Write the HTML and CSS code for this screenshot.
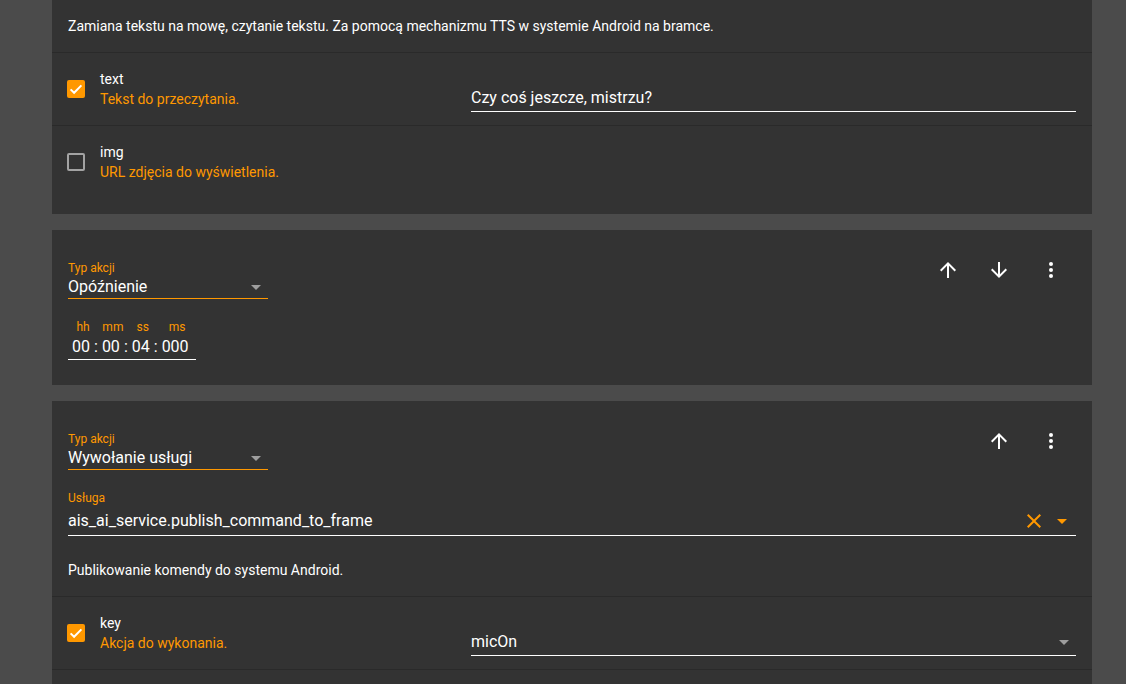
FILE: index.html
```html
<!DOCTYPE html>
<html lang="pl">
<head>
<meta charset="utf-8">
<title>Akcje</title>
<link rel="stylesheet" href="styles.css">
</head>
<body>
<div class="page">
  <section class="card">
    <p class="desc">Zamiana tekstu na mowę, czytanie tekstu. Za pomocą mechanizmu TTS w systemie Android na bramce.</p>
    <div class="param">
      <span class="cb checked"><svg viewBox="0 0 18 18" width="18" height="18"><polyline points="3.6,9.4 7.1,12.8 14.4,5.4" fill="none" stroke="#fff" stroke-width="2"/></svg></span>
      <div class="param-text"><div class="pname">text</div><div class="pdesc">Tekst do przeczytania.</div></div>
      <div class="pfield"><div class="pvalue">Czy coś jeszcze, mistrzu?</div></div>
    </div>
    <div class="param last">
      <span class="cb"></span>
      <div class="param-text"><div class="pname">img</div><div class="pdesc">URL zdjęcia do wyświetlenia.</div></div>
    </div>
  </section>

  <section class="card">
    <div class="head">
      <div class="select">
        <div class="flabel">Typ akcji</div>
        <div class="svalue"><span class="stext">Opóźnienie</span><svg class="drop" viewBox="0 0 24 24" width="24" height="24"><path d="M7 10l5 5 5-5z" fill="#9e9e9e"/></svg></div>
      </div>
      <div class="actions">
        <button class="ibtn" aria-label="W górę"><svg viewBox="0 0 24 24" width="24" height="24"><path d="M4 12l1.41 1.41L11 7.83V20h2V7.83l5.58 5.59L20 12l-8-8-8 8z" fill="#fff"/></svg></button>
        <button class="ibtn down" aria-label="W dół"><svg viewBox="0 0 24 24" width="24" height="24"><path d="M20 12l-1.41-1.41L13 16.17V4h-2v12.17l-5.58-5.59L4 12l8 8 8-8z" fill="#fff"/></svg></button>
        <button class="ibtn more" aria-label="Więcej"><svg viewBox="0 0 24 24" width="24" height="24"><circle cx="12" cy="6" r="2" fill="#fff"/><circle cx="12" cy="12" r="2" fill="#fff"/><circle cx="12" cy="18" r="2" fill="#fff"/></svg></button>
      </div>
    </div>
    <div class="time">
      <div class="unit u2"><span class="ulabel">hh</span><span class="uval">00</span></div>
      <span class="sep">:</span>
      <div class="unit u2"><span class="ulabel">mm</span><span class="uval">00</span></div>
      <span class="sep">:</span>
      <div class="unit u2"><span class="ulabel">ss</span><span class="uval">04</span></div>
      <span class="sep">:</span>
      <div class="unit u3"><span class="ulabel">ms</span><span class="uval">000</span></div>
    </div>
  </section>

  <section class="card">
    <div class="head">
      <div class="select">
        <div class="flabel">Typ akcji</div>
        <div class="svalue"><span class="stext">Wywołanie usługi</span><svg class="drop" viewBox="0 0 24 24" width="24" height="24"><path d="M7 10l5 5 5-5z" fill="#9e9e9e"/></svg></div>
      </div>
      <div class="actions">
        <button class="ibtn" aria-label="W górę"><svg viewBox="0 0 24 24" width="24" height="24"><path d="M4 12l1.41 1.41L11 7.83V20h2V7.83l5.58 5.59L20 12l-8-8-8 8z" fill="#fff"/></svg></button>
        <button class="ibtn more" aria-label="Więcej"><svg viewBox="0 0 24 24" width="24" height="24"><circle cx="12" cy="6" r="2" fill="#fff"/><circle cx="12" cy="12" r="2" fill="#fff"/><circle cx="12" cy="18" r="2" fill="#fff"/></svg></button>
      </div>
    </div>
    <div class="service">
      <div class="flabel">Usługa</div>
      <div class="servvalue">
        <span class="stext">ais_ai_service.publish_command_to_frame</span>
        <svg class="clear" viewBox="0 0 24 24" width="24" height="24"><path d="M19 6.41L17.59 5 12 10.59 6.41 5 5 6.41 10.59 12 5 17.59 6.41 19 12 13.41 17.59 19 19 17.59 13.41 12z" fill="#ff9800"/></svg>
        <svg class="drop2" viewBox="0 0 24 24" width="24" height="24"><path d="M7 10l5 5 5-5z" fill="#ff9800"/></svg>
      </div>
    </div>
    <p class="desc desc-service">Publikowanie komendy do systemu Android.</p>
    <div class="param">
      <span class="cb checked"><svg viewBox="0 0 18 18" width="18" height="18"><polyline points="3.6,9.4 7.1,12.8 14.4,5.4" fill="none" stroke="#fff" stroke-width="2"/></svg></span>
      <div class="param-text"><div class="pname">key</div><div class="pdesc">Akcja do wykonania.</div></div>
      <div class="pfield"><div class="pvalue pselect"><span class="stext">micOn</span><svg class="drop" viewBox="0 0 24 24" width="24" height="24"><path d="M7 10l5 5 5-5z" fill="#9e9e9e"/></svg></div></div>
    </div>
  </section>
</div>
</body>
</html>
```

FILE: styles.css
```css
html, body {
  margin: 0;
  height: 100%;
  overflow: hidden;
  background: #4b4b4b;
  font-family: Roboto, "Noto Sans", sans-serif;
  color: #fff;
}

.page {
  padding: 0 34px 0 52px;
  display: flex;
  flex-direction: column;
  gap: 16px;
}

.card {
  background: #333333;
  padding: 16px 0;
}

.desc {
  margin: 0;
  padding: 0 16px 16px;
  font-size: 14px;
  line-height: 20px;
  border-bottom: 1px solid #2a2a2a;
}

.desc-service {
  margin-top: 24px;
}

.param {
  display: flex;
  align-items: center;
  height: 72px;
  padding: 0 16px;
  border-bottom: 1px solid #2a2a2a;
}

.param.last {
  border-bottom: none;
}

.cb {
  box-sizing: border-box;
  width: 18px;
  height: 18px;
  margin-left: -1px;
  margin-right: 15px;
  border: 2px solid #a3a3a3;
  border-radius: 2px;
  flex: none;
  display: flex;
}

.cb.checked {
  background: #ff9800;
  border: none;
}

.param-text {
  flex: 1;
  font-size: 14px;
  line-height: 20px;
}

.pdesc {
  color: #ff9800;
}

.pfield {
  width: 605px;
  padding-top: 20px;
  flex: none;
}

.pvalue {
  font-size: 16px;
  line-height: 24px;
  padding-bottom: 1px;
  border-bottom: 1px solid #fff;
}

.pselect {
  display: flex;
  align-items: center;
}

.stext {
  flex: 1;
  white-space: nowrap;
}

.head {
  display: flex;
  justify-content: space-between;
  align-items: flex-start;
  padding: 0 16px;
}

.select {
  width: 200px;
  margin-top: 15px;
}

.flabel {
  font-size: 12px;
  line-height: 15px;
  color: #ff9800;
}

.svalue {
  display: flex;
  align-items: center;
  font-size: 16px;
  line-height: 22px;
  height: 22px;
  border-bottom: 1px solid #ff9800;
}

.drop {
  flex: none;
}

.actions {
  display: flex;
  gap: 2px;
  margin-right: 1px;
}

.ibtn {
  width: 48px;
  height: 48px;
  padding: 12px;
  border: none;
  background: none;
  display: flex;
  align-items: center;
  justify-content: center;
}

.ibtn.down {
  margin-left: 1px;
}

.ibtn.more {
  margin-left: 2px;
}

.time {
  display: flex;
  align-items: flex-end;
  width: fit-content;
  margin: 20px 0 9px 16px;
  padding: 0 7px 0 4px;
  border-bottom: 1px solid #fff;
}

.unit {
  display: flex;
  flex-direction: column;
  align-items: center;
}

.u2 {
  width: 18px;
}

.u3 {
  width: 27px;
}

.ulabel {
  font-size: 12px;
  line-height: 16px;
  color: #ff9800;
  padding-left: 4px;
  white-space: nowrap;
}

.uval {
  font-size: 16px;
  line-height: 24px;
}

.sep {
  font-size: 16px;
  line-height: 24px;
  padding: 0 4px;
}

.service {
  margin: 20px 16px 0;
}

.service .flabel {
  line-height: 16px;
}

.servvalue {
  display: flex;
  align-items: center;
  gap: 4px;
  font-size: 16px;
  line-height: 29px;
  height: 29px;
  border-bottom: 1px solid #fff;
  padding-right: 2px;
}

.clear, .drop2 {
  flex: none;
}
```
